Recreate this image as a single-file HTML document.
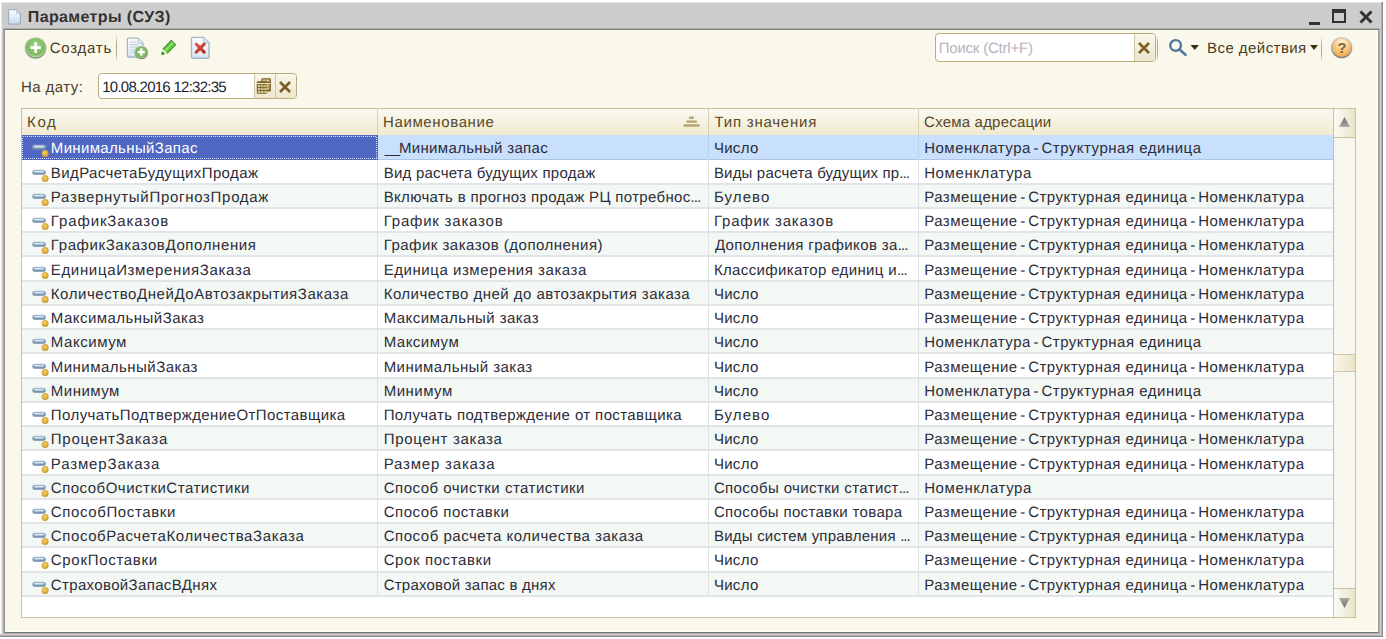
<!DOCTYPE html>
<html><head><meta charset="utf-8">
<style>
*{box-sizing:border-box;margin:0;padding:0}
html,body{width:1386px;height:639px;overflow:hidden;background:#fff;font-family:"Liberation Sans",sans-serif;text-rendering:geometricPrecision}
.abs{position:absolute}
#frame{position:absolute;left:1px;top:2px;width:1382px;height:635px;background:#cdcdcd;box-shadow:inset -1px -1px 0 #8a8a8a,inset -2px -2px 0 #b0b0b0,inset 1px 1px 0 #e6e6e6}
#content{position:absolute;left:4px;top:29px;width:1375px;height:604px;background:#faf8ea;border:1px solid #8a8a8a;border-top-color:#777;border-bottom-color:#777;border-right-color:#999;box-shadow:0 0 0 1px #b0b0b0,inset 0 0 0 1px #fffff2}
.title{position:absolute;top:9px;font-weight:bold;font-size:16px;color:#353230;white-space:nowrap;line-height:18px}
.txt{position:absolute;white-space:nowrap;font-size:15px;line-height:18px;color:#4a3c22;letter-spacing:0}
.sep{position:absolute;width:1px;background:linear-gradient(rgba(190,178,130,0.15),rgba(170,158,110,0.85) 30%,rgba(170,158,110,0.85) 70%,rgba(190,178,130,0.15))}
.inp{position:absolute;background:#fff;border:1px solid #b9ad7e;border-radius:4px;overflow:hidden}
.btn{position:absolute;top:0;bottom:0;background:linear-gradient(#f9f7ec,#ece6cc);border-left:1px solid #cfc5a0}
#grid{position:absolute;left:21px;top:108px;width:1335px;height:510px;background:#fff;border:1px solid #cbc29c}
#hdr{position:absolute;left:0;top:0;width:1312px;height:27px;background:linear-gradient(#fafaf2,#f0ead0);border-bottom:1px solid #d6ceae}
.hc{position:absolute;top:5px;font-size:15px;color:#5a4826;line-height:18px;white-space:nowrap}
.hs{position:absolute;top:0;width:1px;height:26px;background:#d8d0ae}
.r{position:absolute;left:0;width:1311px;height:24px}
.bg{position:absolute;left:0;width:1311px;background:#fff}
.bg.alt{background:#f3f8f4}
.bg.sel{background:#c8e0fc}
.sp{position:absolute;left:0;width:1311px;height:1px;background:#e1e5e9}
.sp.ssel{background:#aec6e6}
.ds{letter-spacing:-1.65px}
.ell{letter-spacing:-0.95px}
.vl{position:absolute;width:1px;background:#dde2e6}
.c{position:absolute;top:5px;font-size:15px;color:#2c2c38;white-space:nowrap;line-height:18px}
.sel .c1{color:#fff}
.bsel{position:absolute;left:0;width:356px;background:#5068c4}
.icw{position:absolute;left:10px;top:7px;width:18px;height:16px}
.ic{display:block}
#sb{position:absolute;left:1311px;top:0;width:22px;height:508px;background:#f7f6ef;border-left:1px solid #cbc29c}
</style></head><body>
<div id="frame"></div>
<div class="abs" style="left:0;top:634px;width:2px;height:3px;background:linear-gradient(#cdcdcd,#b0b0b0 50%,#8a8a8a 100%)"></div>
<div id="content"></div>
<!-- title -->
<svg class="abs" style="left:8px;top:9px" width="14" height="16" viewBox="0 0 14 16"><defs><linearGradient id="dg" x1="0" y1="0" x2="0" y2="1"><stop offset="0" stop-color="#fdfeff"/><stop offset="1" stop-color="#c6d9ea"/></linearGradient></defs><path d="M0.7 1.2 Q0.7 0.7 1.2 0.7 H8.6 L12.3 4.4 V14.6 Q12.3 15.1 11.8 15.1 H1.2 Q0.7 15.1 0.7 14.6 Z" fill="url(#dg)" stroke="#90a8bc" stroke-width="1"/><path d="M8.6 0.7 V4.4 H12.3" fill="#d8e4ee" stroke="#a8bccc" stroke-width="0.8"/></svg>
<div class="title" style="left:27.80px;letter-spacing:0.371px">Параметры (СУЗ)</div>
<!-- window buttons -->
<div class="abs" style="left:1309px;top:22px;width:11px;height:2.5px;background:#333"></div>
<div class="abs" style="left:1332px;top:9px;width:14px;height:14px;border:2px solid #333;border-top-width:4px"></div>
<svg class="abs" style="left:1358px;top:10px" width="16" height="14" viewBox="0 0 16 14"><path d="M2.5 1.5 L13.5 12.5 M13.5 1.5 L2.5 12.5" stroke="#333" stroke-width="3"/></svg>

<!-- toolbar -->
<svg class="abs" style="left:24px;top:36px" width="24" height="24" viewBox="0 0 24 24"><defs><linearGradient id="gring" x1="0" y1="0" x2="0" y2="1"><stop offset="0" stop-color="#d4d8cc"/><stop offset="1" stop-color="#8c9080"/></linearGradient><radialGradient id="gc" cx="0.5" cy="0.4" r="0.6"><stop offset="0" stop-color="#a8d890"/><stop offset="0.75" stop-color="#78bc58"/><stop offset="1" stop-color="#b4dca0"/></radialGradient></defs><circle cx="11.6" cy="11.8" r="10.9" fill="url(#gring)"/><circle cx="11.6" cy="11.6" r="9.7" fill="url(#gc)"/><path d="M11.6 6.3 V16.9 M6.3 11.6 H16.9" stroke="#fff" stroke-width="2.6"/></svg>
<div class="txt" style="top:40px;left:49.70px;letter-spacing:0.750px">Создать</div>
<div class="sep" style="left:116px;top:36px;height:25px"></div>
<!-- copy icon -->
<svg class="abs" style="left:126px;top:37px" width="24" height="23" viewBox="0 0 24 23"><defs><linearGradient id="dg2" x1="0" y1="0" x2="0" y2="1"><stop offset="0" stop-color="#fafcff"/><stop offset="1" stop-color="#d6e4f0"/></linearGradient><linearGradient id="gr2" x1="0" y1="0" x2="0" y2="1"><stop offset="0" stop-color="#ccd0c4"/><stop offset="1" stop-color="#7c8470"/></linearGradient><radialGradient id="gc2" cx="0.5" cy="0.4" r="0.6"><stop offset="0" stop-color="#a4d88a"/><stop offset="0.75" stop-color="#6cb44c"/><stop offset="1" stop-color="#a8d890"/></radialGradient></defs><path d="M2.6 1.2 H12 L17 6.2 V18.8 Q17 20 15.8 20 H2.6 Q1.4 20 1.4 18.8 V2.4 Q1.4 1.2 2.6 1.2 Z" fill="url(#dg2)" stroke="#a4b6c6" stroke-width="1.3"/><path d="M12 1.2 V6.2 H17" fill="#dce8f0" stroke="#b4c4d2" stroke-width="0.9"/><path d="M4 5 H10 M4 7.5 H12 M4 10 H13" stroke="#b8c6d4" stroke-width="0.9"/><path d="M4 13 H9 M4 15.5 H9" stroke="#c4d2de" stroke-width="0.9"/><circle cx="15.3" cy="15.4" r="6.9" fill="url(#gr2)"/><circle cx="15.3" cy="15.2" r="5.8" fill="url(#gc2)"/><path d="M15.3 11.6 V18.8 M11.7 15.2 H18.9" stroke="#fff" stroke-width="2.3"/></svg>
<!-- pencil -->
<svg class="abs" style="left:156px;top:36px" width="24" height="24" viewBox="0 0 24 24"><defs><linearGradient id="pg" gradientUnits="userSpaceOnUse" x1="6.3" y1="12.9" x2="11.5" y2="17.9"><stop offset="0" stop-color="#2f8a1c"/><stop offset="0.45" stop-color="#92e86c"/><stop offset="1" stop-color="#3a9e22"/></linearGradient></defs><path d="M14.9 3.9 L20.1 8.9 L11.5 17.9 L6.3 12.9 Z" fill="url(#pg)"/><path d="M14.9 3.9 L20.1 8.9" stroke="#3a8a22" stroke-width="1"/><path d="M6.3 12.9 L11.5 17.9 L9.26 18.29 L5.94 15.11 Z" fill="#eaf6e2"/><path d="M5.94 15.11 L9.26 18.29 L5.4 19.0 Z" fill="#2e7a1e"/></svg>
<!-- delete icon -->
<svg class="abs" style="left:190px;top:36px" width="21" height="24" viewBox="0 0 21 24"><defs><linearGradient id="dg3" x1="0" y1="0" x2="0" y2="1"><stop offset="0" stop-color="#fafcff"/><stop offset="1" stop-color="#d8e6f2"/></linearGradient><linearGradient id="xg" x1="0" y1="0" x2="1" y2="1"><stop offset="0" stop-color="#e85a48"/><stop offset="1" stop-color="#b02a22"/></linearGradient></defs><path d="M2.8 1.4 H13.5 L19 6.9 V20.9 Q19 22.2 17.7 22.2 H2.8 Q1.5 22.2 1.5 20.9 V2.7 Q1.5 1.4 2.8 1.4 Z" fill="url(#dg3)" stroke="#a4b6c6" stroke-width="1.4"/><path d="M13.5 1.4 V6.9 H19" fill="#dce8f0" stroke="#b4c4d2" stroke-width="0.9"/><path d="M6.2 8.2 L14.2 16.2 M14.2 8.2 L6.2 16.2" stroke="url(#xg)" stroke-width="3.1" stroke-linecap="round"/></svg>

<!-- search -->
<div class="inp" style="left:935px;top:33px;width:221px;height:29px">
  <div class="txt" style="top:6px;color:#b4b4bc;left:2.70px;letter-spacing:-0.208px">Поиск (Ctrl+F)</div>
  <div class="btn" style="left:198px;width:22px"></div>
</div>
<svg class="abs" style="left:1137px;top:42px" width="14" height="12" viewBox="0 0 14 12"><path d="M2 1 L12 11 M12 1 L2 11" stroke="#7a6020" stroke-width="2.6"/></svg>
<div class="sep" style="left:1157px;top:36px;height:25px"></div>
<svg class="abs" style="left:1167px;top:37px" width="22" height="20" viewBox="0 0 22 20"><circle cx="8.6" cy="8.4" r="5.3" fill="none" stroke="#4f77a0" stroke-width="2.4"/><path d="M12.3 12.3 L18.5 17.8" stroke="#4f77a0" stroke-width="2.6" stroke-linecap="round"/></svg>
<svg class="abs" style="left:1190px;top:45px" width="10" height="6" viewBox="0 0 10 6"><path d="M0.5 0 H9 L4.75 5 Z" fill="#3d3010"/></svg>
<div class="txt" style="top:40px;left:1207.10px;letter-spacing:0.436px">Все действия</div>
<svg class="abs" style="left:1310px;top:45px" width="10" height="6" viewBox="0 0 10 6"><path d="M0 0 H8 L4 5 Z" fill="#3d3010"/></svg>
<div class="sep" style="left:1321px;top:37px;height:24px"></div>
<svg class="abs" style="left:1330px;top:36px" width="24" height="24" viewBox="0 0 24 24"><defs><linearGradient id="ghr" x1="0" y1="0" x2="0" y2="1"><stop offset="0" stop-color="#d4cec4"/><stop offset="1" stop-color="#8a847c"/></linearGradient><radialGradient id="gh" cx="0.5" cy="0.25" r="0.75"><stop offset="0" stop-color="#fff4e0"/><stop offset="0.55" stop-color="#f8c880"/><stop offset="1" stop-color="#f0a848"/></radialGradient></defs><circle cx="11.7" cy="11.6" r="10.7" fill="url(#ghr)"/><circle cx="11.7" cy="11.5" r="9.3" fill="url(#gh)"/><text x="11.9" y="16.6" font-family="Liberation Sans" font-weight="bold" font-size="14.5" text-anchor="middle" fill="#7c5a3a">?</text></svg>

<!-- date -->
<div class="txt" style="top:79px;left:20.90px;letter-spacing:0.443px">На дату:</div>
<div class="inp" style="left:98px;top:73px;width:199px;height:26px">
  <div class="txt" style="top:5px;color:#1c1c2a;left:3.20px;letter-spacing:-0.728px">10.08.2016 12:32:35</div>
  <div class="btn" style="left:155px;width:21px"></div>
  <div class="btn" style="left:176px;width:22px"></div>
</div>
<svg class="abs" style="left:256px;top:78px" width="16" height="17" viewBox="0 0 16 17"><rect x="5.3" y="0.3" width="9.6" height="13.2" rx="1.2" fill="#7a6020"/><rect x="6.5" y="1.4" width="3.1" height="2.3" fill="#d6c89a"/><rect x="6.5" y="6.4" width="3.1" height="2.3" fill="#d6c89a"/><rect x="6.5" y="9.3" width="3.1" height="2.3" fill="#d6c89a"/><rect x="10.3" y="1.4" width="3.1" height="2.3" fill="#d6c89a"/><rect x="10.3" y="6.4" width="3.1" height="2.3" fill="#d6c89a"/><rect x="10.3" y="9.3" width="3.1" height="2.3" fill="#d6c89a"/><rect x="0.8" y="3.3" width="10.2" height="12.4" rx="1.2" fill="#7a6020"/><rect x="0.8" y="5.1" width="14" height="0.9" fill="#fff8e4"/><rect x="1.9" y="6.8" width="2.4" height="2.2" fill="#d6c89a"/><rect x="1.9" y="9.8" width="2.4" height="2.2" fill="#d6c89a"/><rect x="1.9" y="12.8" width="2.4" height="2.2" fill="#d6c89a"/><rect x="5.1" y="6.8" width="2.4" height="2.2" fill="#d6c89a"/><rect x="5.1" y="9.8" width="2.4" height="2.2" fill="#d6c89a"/><rect x="5.1" y="12.8" width="2.4" height="2.2" fill="#d6c89a"/><rect x="8.3" y="6.8" width="2.4" height="2.2" fill="#d6c89a"/><rect x="8.3" y="9.8" width="2.4" height="2.2" fill="#d6c89a"/><rect x="8.3" y="12.8" width="2.4" height="2.2" fill="#d6c89a"/></svg>
<svg class="abs" style="left:278px;top:81px" width="14" height="12" viewBox="0 0 14 12"><path d="M2 1 L12 11 M12 1 L2 11" stroke="#7a6020" stroke-width="2.6"/></svg>

<!-- grid -->
<div id="grid">
  <div id="hdr">
    <div class="hc" style="left:5.10px;letter-spacing:1.600px">Код</div>
    <div class="hs" style="left:355px"></div>
    <div class="hc" style="left:361.00px;letter-spacing:0.627px">Наименование</div>
    <div class="hs" style="left:686px"></div>
    <div class="hc" style="left:692.50px;letter-spacing:0.773px">Тип значения</div>
    <div class="hs" style="left:896px"></div>
    <div class="hc" style="left:902.10px;letter-spacing:0.200px">Схема адресации</div>
  </div>
  <svg class="abs" style="left:661px;top:7px" width="18" height="12" viewBox="0 0 18 12"><g fill="#b5a774"><rect x="6" y="0.4" width="5" height="2.6" rx="1.1"/><rect x="3.2" y="4.4" width="11" height="2.4" rx="1.1"/><rect x="0.4" y="8.2" width="16.4" height="2.6" rx="1.2"/></g></svg>
<div class="bg sel" style="top:26px;height:24px"></div>
<div class="sp ssel" style="top:50px"></div>
<div class="bsel" style="top:26px;height:25px"></div>
<div class="bg" style="top:51px;height:24px"></div>
<div class="sp" style="top:74px;height:2px"></div>
<div class="bg alt" style="top:76px;height:23px"></div>
<div class="sp" style="top:98px;height:2px"></div>
<div class="bg" style="top:100px;height:23px"></div>
<div class="sp" style="top:122px;height:2px"></div>
<div class="bg alt" style="top:124px;height:23px"></div>
<div class="sp" style="top:146px;height:2px"></div>
<div class="bg" style="top:148px;height:24px"></div>
<div class="sp" style="top:171px;height:2px"></div>
<div class="bg alt" style="top:173px;height:23px"></div>
<div class="sp" style="top:195px;height:2px"></div>
<div class="bg" style="top:197px;height:23px"></div>
<div class="sp" style="top:219px;height:2px"></div>
<div class="bg alt" style="top:221px;height:23px"></div>
<div class="sp" style="top:243px;height:2px"></div>
<div class="bg" style="top:245px;height:24px"></div>
<div class="sp" style="top:268px;height:2px"></div>
<div class="bg alt" style="top:270px;height:23px"></div>
<div class="sp" style="top:292px;height:2px"></div>
<div class="bg" style="top:294px;height:23px"></div>
<div class="sp" style="top:316px;height:2px"></div>
<div class="bg alt" style="top:318px;height:23px"></div>
<div class="sp" style="top:340px;height:2px"></div>
<div class="bg" style="top:342px;height:24px"></div>
<div class="sp" style="top:365px;height:2px"></div>
<div class="bg alt" style="top:367px;height:23px"></div>
<div class="sp" style="top:389px;height:2px"></div>
<div class="bg" style="top:391px;height:23px"></div>
<div class="sp" style="top:413px;height:2px"></div>
<div class="bg alt" style="top:415px;height:23px"></div>
<div class="sp" style="top:437px;height:2px"></div>
<div class="bg" style="top:439px;height:24px"></div>
<div class="sp" style="top:462px;height:2px"></div>
<div class="bg alt" style="top:464px;height:23px"></div>
<div class="sp" style="top:486px;height:2px"></div>
<div class="r sel" style="top:26.40px"><svg style="position:absolute;left:0;top:0" width="356" height="25"><rect x="0.5" y="1.5" width="354" height="22" fill="none" stroke="#fff" stroke-opacity="0.75" stroke-width="1" stroke-dasharray="1 1" shape-rendering="crispEdges"/></svg><span class="icw"><svg class="ic" width="18" height="16" viewBox="0 0 18 16"><defs><linearGradient id="gb0" x1="0" y1="0" x2="0" y2="1"><stop offset="0" stop-color="#a4bcd2"/><stop offset="1" stop-color="#6a88a4"/></linearGradient><radialGradient id="gy0" cx="0.45" cy="0.4" r="0.65"><stop offset="0" stop-color="#f6d462"/><stop offset="1" stop-color="#c4902c"/></radialGradient></defs><rect x="0.3" y="2.8" width="13.6" height="5" rx="2.5" fill="url(#gb0)"/><rect x="2.2" y="4" width="9.6" height="1.5" rx="0.75" fill="#d6e6f2"/><circle cx="13.1" cy="11.55" r="3.5" fill="url(#gy0)"/></svg></span><div class="c c1" style="left:28.80px;letter-spacing:0.340px">МинимальныйЗапас</div><div class="c c2" style="left:362.70px;letter-spacing:0.325px"><span style='letter-spacing:-1.2px'>__</span>Минимальный запас</div><div class="c c3" style="left:691.90px;letter-spacing:0.300px">Число</div><div class="c c4" style="left:902.20px;letter-spacing:0.503px">Номенклатура<span class="ds"> </span>-<span class="ds"> </span>Структурная единица</div></div>
<div class="r" style="top:50.64px"><span class="icw"><svg class="ic" width="18" height="16" viewBox="0 0 18 16"><defs><linearGradient id="gb1" x1="0" y1="0" x2="0" y2="1"><stop offset="0" stop-color="#a4bcd2"/><stop offset="1" stop-color="#6a88a4"/></linearGradient><radialGradient id="gy1" cx="0.45" cy="0.4" r="0.65"><stop offset="0" stop-color="#f6d462"/><stop offset="1" stop-color="#c4902c"/></radialGradient></defs><rect x="0.3" y="2.8" width="13.6" height="5" rx="2.5" fill="url(#gb1)"/><rect x="2.2" y="4" width="9.6" height="1.5" rx="0.75" fill="#d6e6f2"/><circle cx="13.1" cy="11.55" r="3.5" fill="url(#gy1)"/></svg></span><div class="c c1" style="left:28.80px;letter-spacing:0.405px">ВидРасчетаБудущихПродаж</div><div class="c c2" style="left:361.70px;letter-spacing:0.236px">Вид расчета будущих продаж</div><div class="c c3" style="left:691.90px;letter-spacing:0.178px">Виды расчета будущих пр<span class="ell">...</span></div><div class="c c4" style="left:902.20px;letter-spacing:0.591px">Номенклатура</div></div>
<div class="r" style="top:74.88px"><span class="icw"><svg class="ic" width="18" height="16" viewBox="0 0 18 16"><defs><linearGradient id="gb2" x1="0" y1="0" x2="0" y2="1"><stop offset="0" stop-color="#a4bcd2"/><stop offset="1" stop-color="#6a88a4"/></linearGradient><radialGradient id="gy2" cx="0.45" cy="0.4" r="0.65"><stop offset="0" stop-color="#f6d462"/><stop offset="1" stop-color="#c4902c"/></radialGradient></defs><rect x="0.3" y="2.8" width="13.6" height="5" rx="2.5" fill="url(#gb2)"/><rect x="2.2" y="4" width="9.6" height="1.5" rx="0.75" fill="#d6e6f2"/><circle cx="13.1" cy="11.55" r="3.5" fill="url(#gy2)"/></svg></span><div class="c c1" style="left:28.80px;letter-spacing:0.704px">РазвернутыйПрогнозПродаж</div><div class="c c2" style="left:361.70px;letter-spacing:0.332px">Включать в прогноз продаж РЦ потребнос<span class="ell">...</span></div><div class="c c3" style="left:691.90px;letter-spacing:1.100px">Булево</div><div class="c c4" style="left:902.20px;letter-spacing:0.471px">Размещение<span class="ds"> </span>-<span class="ds"> </span>Структурная единица<span class="ds"> </span>-<span class="ds"> </span>Номенклатура</div></div>
<div class="r" style="top:99.12px"><span class="icw"><svg class="ic" width="18" height="16" viewBox="0 0 18 16"><defs><linearGradient id="gb3" x1="0" y1="0" x2="0" y2="1"><stop offset="0" stop-color="#a4bcd2"/><stop offset="1" stop-color="#6a88a4"/></linearGradient><radialGradient id="gy3" cx="0.45" cy="0.4" r="0.65"><stop offset="0" stop-color="#f6d462"/><stop offset="1" stop-color="#c4902c"/></radialGradient></defs><rect x="0.3" y="2.8" width="13.6" height="5" rx="2.5" fill="url(#gb3)"/><rect x="2.2" y="4" width="9.6" height="1.5" rx="0.75" fill="#d6e6f2"/><circle cx="13.1" cy="11.55" r="3.5" fill="url(#gy3)"/></svg></span><div class="c c1" style="left:28.80px;letter-spacing:0.883px">ГрафикЗаказов</div><div class="c c2" style="left:361.70px;letter-spacing:0.785px">График заказов</div><div class="c c3" style="left:691.90px;letter-spacing:0.808px">График заказов</div><div class="c c4" style="left:902.20px;letter-spacing:0.471px">Размещение<span class="ds"> </span>-<span class="ds"> </span>Структурная единица<span class="ds"> </span>-<span class="ds"> </span>Номенклатура</div></div>
<div class="r" style="top:123.36px"><span class="icw"><svg class="ic" width="18" height="16" viewBox="0 0 18 16"><defs><linearGradient id="gb4" x1="0" y1="0" x2="0" y2="1"><stop offset="0" stop-color="#a4bcd2"/><stop offset="1" stop-color="#6a88a4"/></linearGradient><radialGradient id="gy4" cx="0.45" cy="0.4" r="0.65"><stop offset="0" stop-color="#f6d462"/><stop offset="1" stop-color="#c4902c"/></radialGradient></defs><rect x="0.3" y="2.8" width="13.6" height="5" rx="2.5" fill="url(#gb4)"/><rect x="2.2" y="4" width="9.6" height="1.5" rx="0.75" fill="#d6e6f2"/><circle cx="13.1" cy="11.55" r="3.5" fill="url(#gy4)"/></svg></span><div class="c c1" style="left:28.80px;letter-spacing:0.609px">ГрафикЗаказовДополнения</div><div class="c c2" style="left:361.70px;letter-spacing:0.485px">График заказов (дополнения)</div><div class="c c3" style="left:692.90px;letter-spacing:0.386px">Дополнения графиков за<span class="ell">...</span></div><div class="c c4" style="left:902.20px;letter-spacing:0.471px">Размещение<span class="ds"> </span>-<span class="ds"> </span>Структурная единица<span class="ds"> </span>-<span class="ds"> </span>Номенклатура</div></div>
<div class="r" style="top:147.60px"><span class="icw"><svg class="ic" width="18" height="16" viewBox="0 0 18 16"><defs><linearGradient id="gb5" x1="0" y1="0" x2="0" y2="1"><stop offset="0" stop-color="#a4bcd2"/><stop offset="1" stop-color="#6a88a4"/></linearGradient><radialGradient id="gy5" cx="0.45" cy="0.4" r="0.65"><stop offset="0" stop-color="#f6d462"/><stop offset="1" stop-color="#c4902c"/></radialGradient></defs><rect x="0.3" y="2.8" width="13.6" height="5" rx="2.5" fill="url(#gb5)"/><rect x="2.2" y="4" width="9.6" height="1.5" rx="0.75" fill="#d6e6f2"/><circle cx="13.1" cy="11.55" r="3.5" fill="url(#gy5)"/></svg></span><div class="c c1" style="left:28.80px;letter-spacing:0.657px">ЕдиницаИзмеренияЗаказа</div><div class="c c2" style="left:361.70px;letter-spacing:0.552px">Единица измерения заказа</div><div class="c c3" style="left:691.90px;letter-spacing:0.355px">Классификатор единиц и<span class="ell">...</span></div><div class="c c4" style="left:902.20px;letter-spacing:0.471px">Размещение<span class="ds"> </span>-<span class="ds"> </span>Структурная единица<span class="ds"> </span>-<span class="ds"> </span>Номенклатура</div></div>
<div class="r" style="top:171.84px"><span class="icw"><svg class="ic" width="18" height="16" viewBox="0 0 18 16"><defs><linearGradient id="gb6" x1="0" y1="0" x2="0" y2="1"><stop offset="0" stop-color="#a4bcd2"/><stop offset="1" stop-color="#6a88a4"/></linearGradient><radialGradient id="gy6" cx="0.45" cy="0.4" r="0.65"><stop offset="0" stop-color="#f6d462"/><stop offset="1" stop-color="#c4902c"/></radialGradient></defs><rect x="0.3" y="2.8" width="13.6" height="5" rx="2.5" fill="url(#gb6)"/><rect x="2.2" y="4" width="9.6" height="1.5" rx="0.75" fill="#d6e6f2"/><circle cx="13.1" cy="11.55" r="3.5" fill="url(#gy6)"/></svg></span><div class="c c1" style="left:28.80px;letter-spacing:0.564px">КоличествоДнейДоАвтозакрытияЗаказа</div><div class="c c2" style="left:361.70px;letter-spacing:0.468px">Количество дней до автозакрытия заказа</div><div class="c c3" style="left:691.90px;letter-spacing:0.300px">Число</div><div class="c c4" style="left:902.20px;letter-spacing:0.471px">Размещение<span class="ds"> </span>-<span class="ds"> </span>Структурная единица<span class="ds"> </span>-<span class="ds"> </span>Номенклатура</div></div>
<div class="r" style="top:196.08px"><span class="icw"><svg class="ic" width="18" height="16" viewBox="0 0 18 16"><defs><linearGradient id="gb7" x1="0" y1="0" x2="0" y2="1"><stop offset="0" stop-color="#a4bcd2"/><stop offset="1" stop-color="#6a88a4"/></linearGradient><radialGradient id="gy7" cx="0.45" cy="0.4" r="0.65"><stop offset="0" stop-color="#f6d462"/><stop offset="1" stop-color="#c4902c"/></radialGradient></defs><rect x="0.3" y="2.8" width="13.6" height="5" rx="2.5" fill="url(#gb7)"/><rect x="2.2" y="4" width="9.6" height="1.5" rx="0.75" fill="#d6e6f2"/><circle cx="13.1" cy="11.55" r="3.5" fill="url(#gy7)"/></svg></span><div class="c c1" style="left:28.80px;letter-spacing:0.469px">МаксимальныйЗаказ</div><div class="c c2" style="left:361.70px;letter-spacing:0.429px">Максимальный заказ</div><div class="c c3" style="left:691.90px;letter-spacing:0.300px">Число</div><div class="c c4" style="left:902.20px;letter-spacing:0.471px">Размещение<span class="ds"> </span>-<span class="ds"> </span>Структурная единица<span class="ds"> </span>-<span class="ds"> </span>Номенклатура</div></div>
<div class="r" style="top:220.32px"><span class="icw"><svg class="ic" width="18" height="16" viewBox="0 0 18 16"><defs><linearGradient id="gb8" x1="0" y1="0" x2="0" y2="1"><stop offset="0" stop-color="#a4bcd2"/><stop offset="1" stop-color="#6a88a4"/></linearGradient><radialGradient id="gy8" cx="0.45" cy="0.4" r="0.65"><stop offset="0" stop-color="#f6d462"/><stop offset="1" stop-color="#c4902c"/></radialGradient></defs><rect x="0.3" y="2.8" width="13.6" height="5" rx="2.5" fill="url(#gb8)"/><rect x="2.2" y="4" width="9.6" height="1.5" rx="0.75" fill="#d6e6f2"/><circle cx="13.1" cy="11.55" r="3.5" fill="url(#gy8)"/></svg></span><div class="c c1" style="left:28.80px;letter-spacing:0.543px">Максимум</div><div class="c c2" style="left:361.70px;letter-spacing:0.471px">Максимум</div><div class="c c3" style="left:691.90px;letter-spacing:0.300px">Число</div><div class="c c4" style="left:902.20px;letter-spacing:0.503px">Номенклатура<span class="ds"> </span>-<span class="ds"> </span>Структурная единица</div></div>
<div class="r" style="top:244.56px"><span class="icw"><svg class="ic" width="18" height="16" viewBox="0 0 18 16"><defs><linearGradient id="gb9" x1="0" y1="0" x2="0" y2="1"><stop offset="0" stop-color="#a4bcd2"/><stop offset="1" stop-color="#6a88a4"/></linearGradient><radialGradient id="gy9" cx="0.45" cy="0.4" r="0.65"><stop offset="0" stop-color="#f6d462"/><stop offset="1" stop-color="#c4902c"/></radialGradient></defs><rect x="0.3" y="2.8" width="13.6" height="5" rx="2.5" fill="url(#gb9)"/><rect x="2.2" y="4" width="9.6" height="1.5" rx="0.75" fill="#d6e6f2"/><circle cx="13.1" cy="11.55" r="3.5" fill="url(#gy9)"/></svg></span><div class="c c1" style="left:28.80px;letter-spacing:0.473px">МинимальныйЗаказ</div><div class="c c2" style="left:361.70px;letter-spacing:0.431px">Минимальный заказ</div><div class="c c3" style="left:691.90px;letter-spacing:0.300px">Число</div><div class="c c4" style="left:902.20px;letter-spacing:0.471px">Размещение<span class="ds"> </span>-<span class="ds"> </span>Структурная единица<span class="ds"> </span>-<span class="ds"> </span>Номенклатура</div></div>
<div class="r" style="top:268.80px"><span class="icw"><svg class="ic" width="18" height="16" viewBox="0 0 18 16"><defs><linearGradient id="gb10" x1="0" y1="0" x2="0" y2="1"><stop offset="0" stop-color="#a4bcd2"/><stop offset="1" stop-color="#6a88a4"/></linearGradient><radialGradient id="gy10" cx="0.45" cy="0.4" r="0.65"><stop offset="0" stop-color="#f6d462"/><stop offset="1" stop-color="#c4902c"/></radialGradient></defs><rect x="0.3" y="2.8" width="13.6" height="5" rx="2.5" fill="url(#gb10)"/><rect x="2.2" y="4" width="9.6" height="1.5" rx="0.75" fill="#d6e6f2"/><circle cx="13.1" cy="11.55" r="3.5" fill="url(#gy10)"/></svg></span><div class="c c1" style="left:28.80px;letter-spacing:0.483px">Минимум</div><div class="c c2" style="left:361.70px;letter-spacing:0.483px">Минимум</div><div class="c c3" style="left:691.90px;letter-spacing:0.300px">Число</div><div class="c c4" style="left:902.20px;letter-spacing:0.503px">Номенклатура<span class="ds"> </span>-<span class="ds"> </span>Структурная единица</div></div>
<div class="r" style="top:293.04px"><span class="icw"><svg class="ic" width="18" height="16" viewBox="0 0 18 16"><defs><linearGradient id="gb11" x1="0" y1="0" x2="0" y2="1"><stop offset="0" stop-color="#a4bcd2"/><stop offset="1" stop-color="#6a88a4"/></linearGradient><radialGradient id="gy11" cx="0.45" cy="0.4" r="0.65"><stop offset="0" stop-color="#f6d462"/><stop offset="1" stop-color="#c4902c"/></radialGradient></defs><rect x="0.3" y="2.8" width="13.6" height="5" rx="2.5" fill="url(#gb11)"/><rect x="2.2" y="4" width="9.6" height="1.5" rx="0.75" fill="#d6e6f2"/><circle cx="13.1" cy="11.55" r="3.5" fill="url(#gy11)"/></svg></span><div class="c c1" style="left:28.80px;letter-spacing:0.428px">ПолучатьПодтверждениеОтПоставщика</div><div class="c c2" style="left:361.70px;letter-spacing:0.389px">Получать подтверждение от поставщика</div><div class="c c3" style="left:691.90px;letter-spacing:1.100px">Булево</div><div class="c c4" style="left:902.20px;letter-spacing:0.471px">Размещение<span class="ds"> </span>-<span class="ds"> </span>Структурная единица<span class="ds"> </span>-<span class="ds"> </span>Номенклатура</div></div>
<div class="r" style="top:317.28px"><span class="icw"><svg class="ic" width="18" height="16" viewBox="0 0 18 16"><defs><linearGradient id="gb12" x1="0" y1="0" x2="0" y2="1"><stop offset="0" stop-color="#a4bcd2"/><stop offset="1" stop-color="#6a88a4"/></linearGradient><radialGradient id="gy12" cx="0.45" cy="0.4" r="0.65"><stop offset="0" stop-color="#f6d462"/><stop offset="1" stop-color="#c4902c"/></radialGradient></defs><rect x="0.3" y="2.8" width="13.6" height="5" rx="2.5" fill="url(#gb12)"/><rect x="2.2" y="4" width="9.6" height="1.5" rx="0.75" fill="#d6e6f2"/><circle cx="13.1" cy="11.55" r="3.5" fill="url(#gy12)"/></svg></span><div class="c c1" style="left:28.80px;letter-spacing:0.783px">ПроцентЗаказа</div><div class="c c2" style="left:361.70px;letter-spacing:0.708px">Процент заказа</div><div class="c c3" style="left:691.90px;letter-spacing:0.300px">Число</div><div class="c c4" style="left:902.20px;letter-spacing:0.471px">Размещение<span class="ds"> </span>-<span class="ds"> </span>Структурная единица<span class="ds"> </span>-<span class="ds"> </span>Номенклатура</div></div>
<div class="r" style="top:341.52px"><span class="icw"><svg class="ic" width="18" height="16" viewBox="0 0 18 16"><defs><linearGradient id="gb13" x1="0" y1="0" x2="0" y2="1"><stop offset="0" stop-color="#a4bcd2"/><stop offset="1" stop-color="#6a88a4"/></linearGradient><radialGradient id="gy13" cx="0.45" cy="0.4" r="0.65"><stop offset="0" stop-color="#f6d462"/><stop offset="1" stop-color="#c4902c"/></radialGradient></defs><rect x="0.3" y="2.8" width="13.6" height="5" rx="2.5" fill="url(#gb13)"/><rect x="2.2" y="4" width="9.6" height="1.5" rx="0.75" fill="#d6e6f2"/><circle cx="13.1" cy="11.55" r="3.5" fill="url(#gy13)"/></svg></span><div class="c c1" style="left:28.80px;letter-spacing:0.855px">РазмерЗаказа</div><div class="c c2" style="left:361.70px;letter-spacing:0.808px">Размер заказа</div><div class="c c3" style="left:691.90px;letter-spacing:0.300px">Число</div><div class="c c4" style="left:902.20px;letter-spacing:0.471px">Размещение<span class="ds"> </span>-<span class="ds"> </span>Структурная единица<span class="ds"> </span>-<span class="ds"> </span>Номенклатура</div></div>
<div class="r" style="top:365.76px"><span class="icw"><svg class="ic" width="18" height="16" viewBox="0 0 18 16"><defs><linearGradient id="gb14" x1="0" y1="0" x2="0" y2="1"><stop offset="0" stop-color="#a4bcd2"/><stop offset="1" stop-color="#6a88a4"/></linearGradient><radialGradient id="gy14" cx="0.45" cy="0.4" r="0.65"><stop offset="0" stop-color="#f6d462"/><stop offset="1" stop-color="#c4902c"/></radialGradient></defs><rect x="0.3" y="2.8" width="13.6" height="5" rx="2.5" fill="url(#gb14)"/><rect x="2.2" y="4" width="9.6" height="1.5" rx="0.75" fill="#d6e6f2"/><circle cx="13.1" cy="11.55" r="3.5" fill="url(#gy14)"/></svg></span><div class="c c1" style="left:28.80px;letter-spacing:0.500px">СпособОчисткиСтатистики</div><div class="c c2" style="left:361.70px;letter-spacing:0.496px">Способ очистки статистики</div><div class="c c3" style="left:691.90px;letter-spacing:0.370px">Способы очистки статист<span class="ell">...</span></div><div class="c c4" style="left:902.20px;letter-spacing:0.591px">Номенклатура</div></div>
<div class="r" style="top:390.00px"><span class="icw"><svg class="ic" width="18" height="16" viewBox="0 0 18 16"><defs><linearGradient id="gb15" x1="0" y1="0" x2="0" y2="1"><stop offset="0" stop-color="#a4bcd2"/><stop offset="1" stop-color="#6a88a4"/></linearGradient><radialGradient id="gy15" cx="0.45" cy="0.4" r="0.65"><stop offset="0" stop-color="#f6d462"/><stop offset="1" stop-color="#c4902c"/></radialGradient></defs><rect x="0.3" y="2.8" width="13.6" height="5" rx="2.5" fill="url(#gb15)"/><rect x="2.2" y="4" width="9.6" height="1.5" rx="0.75" fill="#d6e6f2"/><circle cx="13.1" cy="11.55" r="3.5" fill="url(#gy15)"/></svg></span><div class="c c1" style="left:28.80px;letter-spacing:0.623px">СпособПоставки</div><div class="c c2" style="left:361.70px;letter-spacing:0.507px">Способ поставки</div><div class="c c3" style="left:691.90px;letter-spacing:0.336px">Способы поставки товара</div><div class="c c4" style="left:902.20px;letter-spacing:0.471px">Размещение<span class="ds"> </span>-<span class="ds"> </span>Структурная единица<span class="ds"> </span>-<span class="ds"> </span>Номенклатура</div></div>
<div class="r" style="top:414.24px"><span class="icw"><svg class="ic" width="18" height="16" viewBox="0 0 18 16"><defs><linearGradient id="gb16" x1="0" y1="0" x2="0" y2="1"><stop offset="0" stop-color="#a4bcd2"/><stop offset="1" stop-color="#6a88a4"/></linearGradient><radialGradient id="gy16" cx="0.45" cy="0.4" r="0.65"><stop offset="0" stop-color="#f6d462"/><stop offset="1" stop-color="#c4902c"/></radialGradient></defs><rect x="0.3" y="2.8" width="13.6" height="5" rx="2.5" fill="url(#gb16)"/><rect x="2.2" y="4" width="9.6" height="1.5" rx="0.75" fill="#d6e6f2"/><circle cx="13.1" cy="11.55" r="3.5" fill="url(#gy16)"/></svg></span><div class="c c1" style="left:28.80px;letter-spacing:0.604px">СпособРасчетаКоличестваЗаказа</div><div class="c c2" style="left:361.70px;letter-spacing:0.526px">Способ расчета количества заказа</div><div class="c c3" style="left:691.90px;letter-spacing:0.230px">Виды систем управления <span class="ell">...</span></div><div class="c c4" style="left:902.20px;letter-spacing:0.471px">Размещение<span class="ds"> </span>-<span class="ds"> </span>Структурная единица<span class="ds"> </span>-<span class="ds"> </span>Номенклатура</div></div>
<div class="r" style="top:438.48px"><span class="icw"><svg class="ic" width="18" height="16" viewBox="0 0 18 16"><defs><linearGradient id="gb17" x1="0" y1="0" x2="0" y2="1"><stop offset="0" stop-color="#a4bcd2"/><stop offset="1" stop-color="#6a88a4"/></linearGradient><radialGradient id="gy17" cx="0.45" cy="0.4" r="0.65"><stop offset="0" stop-color="#f6d462"/><stop offset="1" stop-color="#c4902c"/></radialGradient></defs><rect x="0.3" y="2.8" width="13.6" height="5" rx="2.5" fill="url(#gb17)"/><rect x="2.2" y="4" width="9.6" height="1.5" rx="0.75" fill="#d6e6f2"/><circle cx="13.1" cy="11.55" r="3.5" fill="url(#gy17)"/></svg></span><div class="c c1" style="left:28.80px;letter-spacing:0.700px">СрокПоставки</div><div class="c c2" style="left:361.70px;letter-spacing:0.600px">Срок поставки</div><div class="c c3" style="left:691.90px;letter-spacing:0.300px">Число</div><div class="c c4" style="left:902.20px;letter-spacing:0.471px">Размещение<span class="ds"> </span>-<span class="ds"> </span>Структурная единица<span class="ds"> </span>-<span class="ds"> </span>Номенклатура</div></div>
<div class="r" style="top:462.72px"><span class="icw"><svg class="ic" width="18" height="16" viewBox="0 0 18 16"><defs><linearGradient id="gb18" x1="0" y1="0" x2="0" y2="1"><stop offset="0" stop-color="#a4bcd2"/><stop offset="1" stop-color="#6a88a4"/></linearGradient><radialGradient id="gy18" cx="0.45" cy="0.4" r="0.65"><stop offset="0" stop-color="#f6d462"/><stop offset="1" stop-color="#c4902c"/></radialGradient></defs><rect x="0.3" y="2.8" width="13.6" height="5" rx="2.5" fill="url(#gb18)"/><rect x="2.2" y="4" width="9.6" height="1.5" rx="0.75" fill="#d6e6f2"/><circle cx="13.1" cy="11.55" r="3.5" fill="url(#gy18)"/></svg></span><div class="c c1" style="left:28.80px;letter-spacing:0.356px">СтраховойЗапасВДнях</div><div class="c c2" style="left:361.70px;letter-spacing:0.229px">Страховой запас в днях</div><div class="c c3" style="left:691.90px;letter-spacing:0.300px">Число</div><div class="c c4" style="left:902.20px;letter-spacing:0.471px">Размещение<span class="ds"> </span>-<span class="ds"> </span>Структурная единица<span class="ds"> </span>-<span class="ds"> </span>Номенклатура</div></div>
  <div class="vl" style="left:355px;top:51px;height:436px"></div>
  <div class="vl" style="left:686px;top:26px;height:461px"></div>
  <div class="vl" style="left:896px;top:26px;height:461px"></div>
  <div class="vl" style="left:686px;top:26px;height:24px;background:#b9d0ec"></div>
  <div class="vl" style="left:896px;top:26px;height:24px;background:#b9d0ec"></div>
  <div id="sb">
    <div class="abs" style="left:0;top:0;width:21px;height:29px;background:linear-gradient(90deg,#fafaf4,#ebe5c8);border-bottom:1px solid #cbc29c"></div>
    <svg class="abs" style="left:5px;top:8px" width="11" height="10" viewBox="0 0 11 10"><defs><linearGradient id="ta" x1="0" y1="0" x2="0" y2="1"><stop offset="0" stop-color="#707070"/><stop offset="1" stop-color="#a8a8a8"/></linearGradient></defs><path d="M5.5 0 L11 10 H0 Z" fill="url(#ta)"/></svg>
    <div class="abs" style="left:0;top:245px;width:21px;height:18px;background:linear-gradient(90deg,#f8f6ea,#ebe4c6);border-top:1px solid #d0c8a8;border-bottom:1px solid #d0c8a8"></div>
    <div class="abs" style="left:0;top:479px;width:21px;height:29px;background:linear-gradient(90deg,#fafaf4,#ebe5c8);border-top:1px solid #cbc29c"></div>
    <svg class="abs" style="left:5px;top:489px" width="11" height="10" viewBox="0 0 11 10"><defs><linearGradient id="tb" x1="0" y1="0" x2="0" y2="1"><stop offset="0" stop-color="#a8a8a8"/><stop offset="1" stop-color="#707070"/></linearGradient></defs><path d="M5.5 10 L11 0 H0 Z" fill="url(#tb)"/></svg>
  </div>
</div>
</body></html>
